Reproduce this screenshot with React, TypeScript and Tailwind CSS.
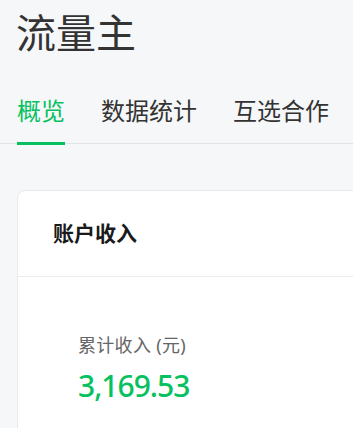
import React, { useState } from 'react';

const TABS = ['概览', '数据统计', '互选合作'];

const App: React.FC = () => {
  const [active, setActive] = useState(0);

  return (
    <div
      className="w-[353px] h-[428px] overflow-hidden bg-[#f6f7f9] text-[#333]"
      style={{ fontFamily: '"Noto Sans", "Noto Sans CJK SC", sans-serif' }}
    >
      <h1 className="pl-[16px] pt-[13px] text-[40px] leading-[40px] font-normal text-[#333]">流量主</h1>

      <div className="mt-[46px] flex gap-[36px] px-[17px] border-b border-[#e2e3e5]">
        {TABS.map((t, i) => (
          <button
            key={t}
            onClick={() => setActive(i)}
            className={`relative pb-[20px] text-[24px] leading-[24px] whitespace-nowrap ${i === active ? 'text-[#07c160]' : 'text-[#333]'}`}
          >
            {t}
            {i === active && <span className="absolute left-0 right-0 bottom-[-2px] h-[3px] bg-[#07c160]" />}
          </button>
        ))}
      </div>

      <div className="mt-[46px] ml-[17px] w-[400px] bg-white border border-[#e8e9eb] rounded-lg">
        <div className="px-[35px] pt-[32px] pb-[32px] border-b border-[#ececec]">
          <h2 className="text-[21px] leading-[21px] font-bold text-[#1a1a1a]">账户收入</h2>
        </div>
        <div className="pl-[60px] pt-[59px] pb-[40px]">
          <div className="text-[18px] leading-[18px] tracking-[0.3px] text-[#666]">累计收入 (元)</div>
          <div className="mt-[17px] text-[30px] leading-[30px] font-medium tracking-[-1px] text-[#07c160]">3,169.53</div>
        </div>
      </div>
    </div>
  );
};

export default App;
